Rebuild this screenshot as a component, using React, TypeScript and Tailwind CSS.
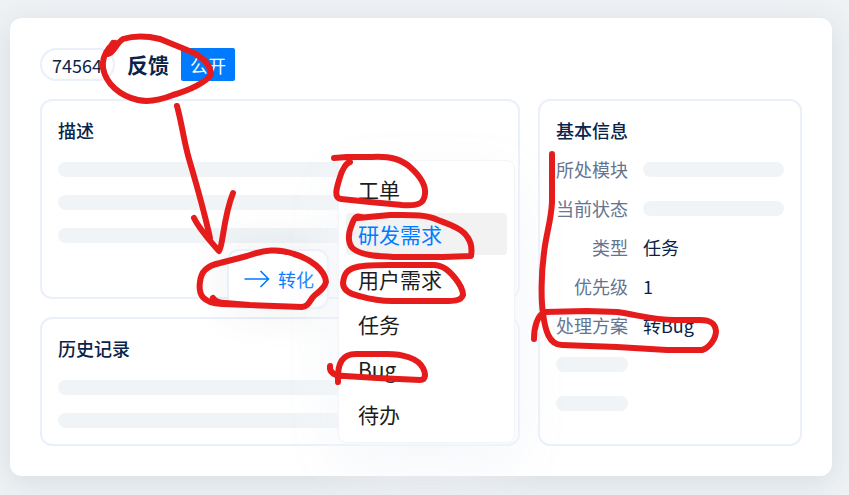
import React from 'react';

const menuItems = [
  { label: '工单', active: false },
  { label: '研发需求', active: true },
  { label: '用户需求', active: false },
  { label: '任务', active: false },
  { label: 'Bug', active: false },
  { label: '待办', active: false },
];

const fields = [
  { label: '所处模块', value: '' },
  { label: '当前状态', value: '' },
  { label: '类型', value: '任务' },
  { label: '优先级', value: '1' },
  { label: '处理方案', value: '转Bug' },
];

// Freehand marker strokes
const strokes = [
  'M113 43 C110 47 108 51 108 54 C114 53 116 43 123 39 C133 36 147 36 160 39 L187 50 C200 55 210 63 211 74 C207 82 190 90 173 95 C158 101 147 102 138 100 C120 96 106 84 103 68 C102 59 105 53 109 48 L115 43',
  'M177 106 C182 124 184 142 189 159 C197 186 205 215 210 238',
  'M194 218 C200 230 209 240 219 251 C223 247 223 218 233 193',
  'M213 298 C216 302 219 303 225 303 L250 305 L302 307 C310 306 309 300 315 295 C320 291 325 287 326 282 C325 270 311 259 294 254 C278 248 264 250 247 256 L220 263 C206 266 201 272 200 282 C198 295 203 303 222 304 L250 305',
  'M334 158 L347 157 L372 157 C392 156 402 160 410 167 C420 176 426 186 425 194 C424 204 418 206 402 205 L370 202 L341 199 C333 198 337 187 340 177 C342 170 346 163 350 162',
  'M361 217 C355 215 354 219 352 224 C347 236 348 246 355 250 C365 256 380 256 393 257 L443 257 L471 256 C472 250 472 244 468 238 C463 229 451 225 438 220 C425 214 410 215 390 215 L358 218',
  'M357 267 C365 265 377 265 390 265 L433 265 C444 265 450 272 455 278 C459 283 463 289 463 295 C461 302 450 301 440 301 L392 301 C375 301 366 298 359 296 C350 294 343 290 343 283 C344 274 347 269 357 267 Z',
  'M330 366 C329 373 335 376 345 376 L377 378 L420 380 C426 380 426 374 423 368 C418 358 402 354 387 354 L356 354 C343 354 337 362 338 382',
  'M552 154 L552 202 C551 222 546 234 544 253 C541 275 541 300 543 313 C545 330 549 345 562 345 L617 347 L667 350 L702 350 C709 348 716 339 716 331 C715 322 709 320 700 320 L675 320 C653 320 638 315 617 312 L587 311 L545 312 C537 315 534 328 534 339',
];

function Bar() {
  return <div className="h-[15px] w-full rounded-full bg-[#f0f4f7]" />;
}

function Panel({ title, className = '', children }: { title: string; className?: string; children: React.ReactNode }) {
  return (
    <section className={`rounded-xl border-2 border-[#e9f0fc] px-4 pt-4 ${className}`}>
      <h2 className="text-lg leading-[27px] font-medium">{title}</h2>
      {children}
    </section>
  );
}

export default function App() {
  return (
    <div className="relative min-h-screen overflow-hidden bg-[#eef2f5] pt-[18px] pr-[17px] pb-[19px] pl-[10px] font-['Noto_Sans_CJK_SC',sans-serif] text-[#0a2348]">
      <main className="rounded-xl bg-white p-[30px] shadow-[0_6px_30px_rgba(60,64,70,0.12)]">
        <header className="flex h-[33px] items-center gap-3">
          <span className="flex h-full w-[75px] items-center rounded-full border-2 border-[#e9f0fc] pl-[10px] text-lg">74564</span>
          <h1 className="text-[21px] font-bold">反馈</h1>
          <span className="flex h-full items-center rounded-xs bg-[#007bff] px-[9px] text-lg text-white">公开</span>
        </header>

        <div className="mt-[18px] grid grid-cols-[minmax(0,1fr)_264px] gap-[18px]">
          <div className="relative flex flex-col gap-[18px]">
            <Panel title="描述" className="flex-1">
              <div className="mt-[18px] flex flex-col gap-[18px]">
                <Bar />
                <Bar />
                <Bar />
              </div>
            </Panel>
            <Panel title="历史记录" className="pb-4">
              <div className="mt-[18px] flex flex-col gap-[18px]">
                <Bar />
                <Bar />
              </div>
            </Panel>

            {/* Convert action and its open menu */}
            <button
              type="button"
              className="absolute top-[150px] left-[187px] flex h-[60px] w-[102px] items-center gap-2 rounded-xl border-2 border-[#e9f0fc] bg-white pl-[15px] text-lg text-[#007bff] shadow-[0_0_45px_rgba(60,64,70,0.09)]"
            >
              <svg width="26" height="18" viewBox="0 0 26 18" fill="none" stroke="currentColor" strokeWidth="1.6" aria-hidden="true">
                <path d="M0.5 9H24.5M16.5 1L24.5 9L16.5 17" />
              </svg>
              转化
            </button>
            <ul className="absolute top-[61px] left-[298px] flex w-[177px] flex-col gap-[3px] rounded-lg border border-[#f2f4f8] bg-white p-[7px] shadow-[0_20px_60px_rgba(243,246,250,0.95)]">
              {menuItems.map((item) => (
                <li key={item.label}>
                  <button
                    type="button"
                    className={`block h-[42px] w-full rounded-sm px-3 text-left text-[21px] leading-[42px] ${
                      item.active ? 'bg-[#f2f2f2] text-[#007bff]' : 'text-[#1c1c1c]'
                    }`}
                  >
                    {item.label}
                  </button>
                </li>
              ))}
            </ul>
          </div>

          <Panel title="基本信息" className="pb-[33px]">
            <dl className="mt-3 flex flex-col gap-3 text-lg leading-[27px]">
              {fields.map((field) => (
                <div key={field.label} className="grid grid-cols-[72px_minmax(0,1fr)] items-center gap-[15px]">
                  <dt className="text-right text-[#64748f]">{field.label}</dt>
                  <dd>{field.value || <Bar />}</dd>
                </div>
              ))}
            </dl>
            <div className="mt-[18px] flex w-[72px] flex-col gap-6">
              <Bar />
              <Bar />
            </div>
          </Panel>
        </div>
      </main>

      <svg
        className="pointer-events-none absolute top-0 left-0"
        width="849"
        height="495"
        viewBox="0 0 849 495"
        fill="none"
        stroke="#e61c1c"
        strokeWidth="6"
        strokeLinecap="round"
        strokeLinejoin="round"
        aria-hidden="true"
      >
        {strokes.map((d) => (
          <path key={d} d={d} />
        ))}
      </svg>
    </div>
  );
}
